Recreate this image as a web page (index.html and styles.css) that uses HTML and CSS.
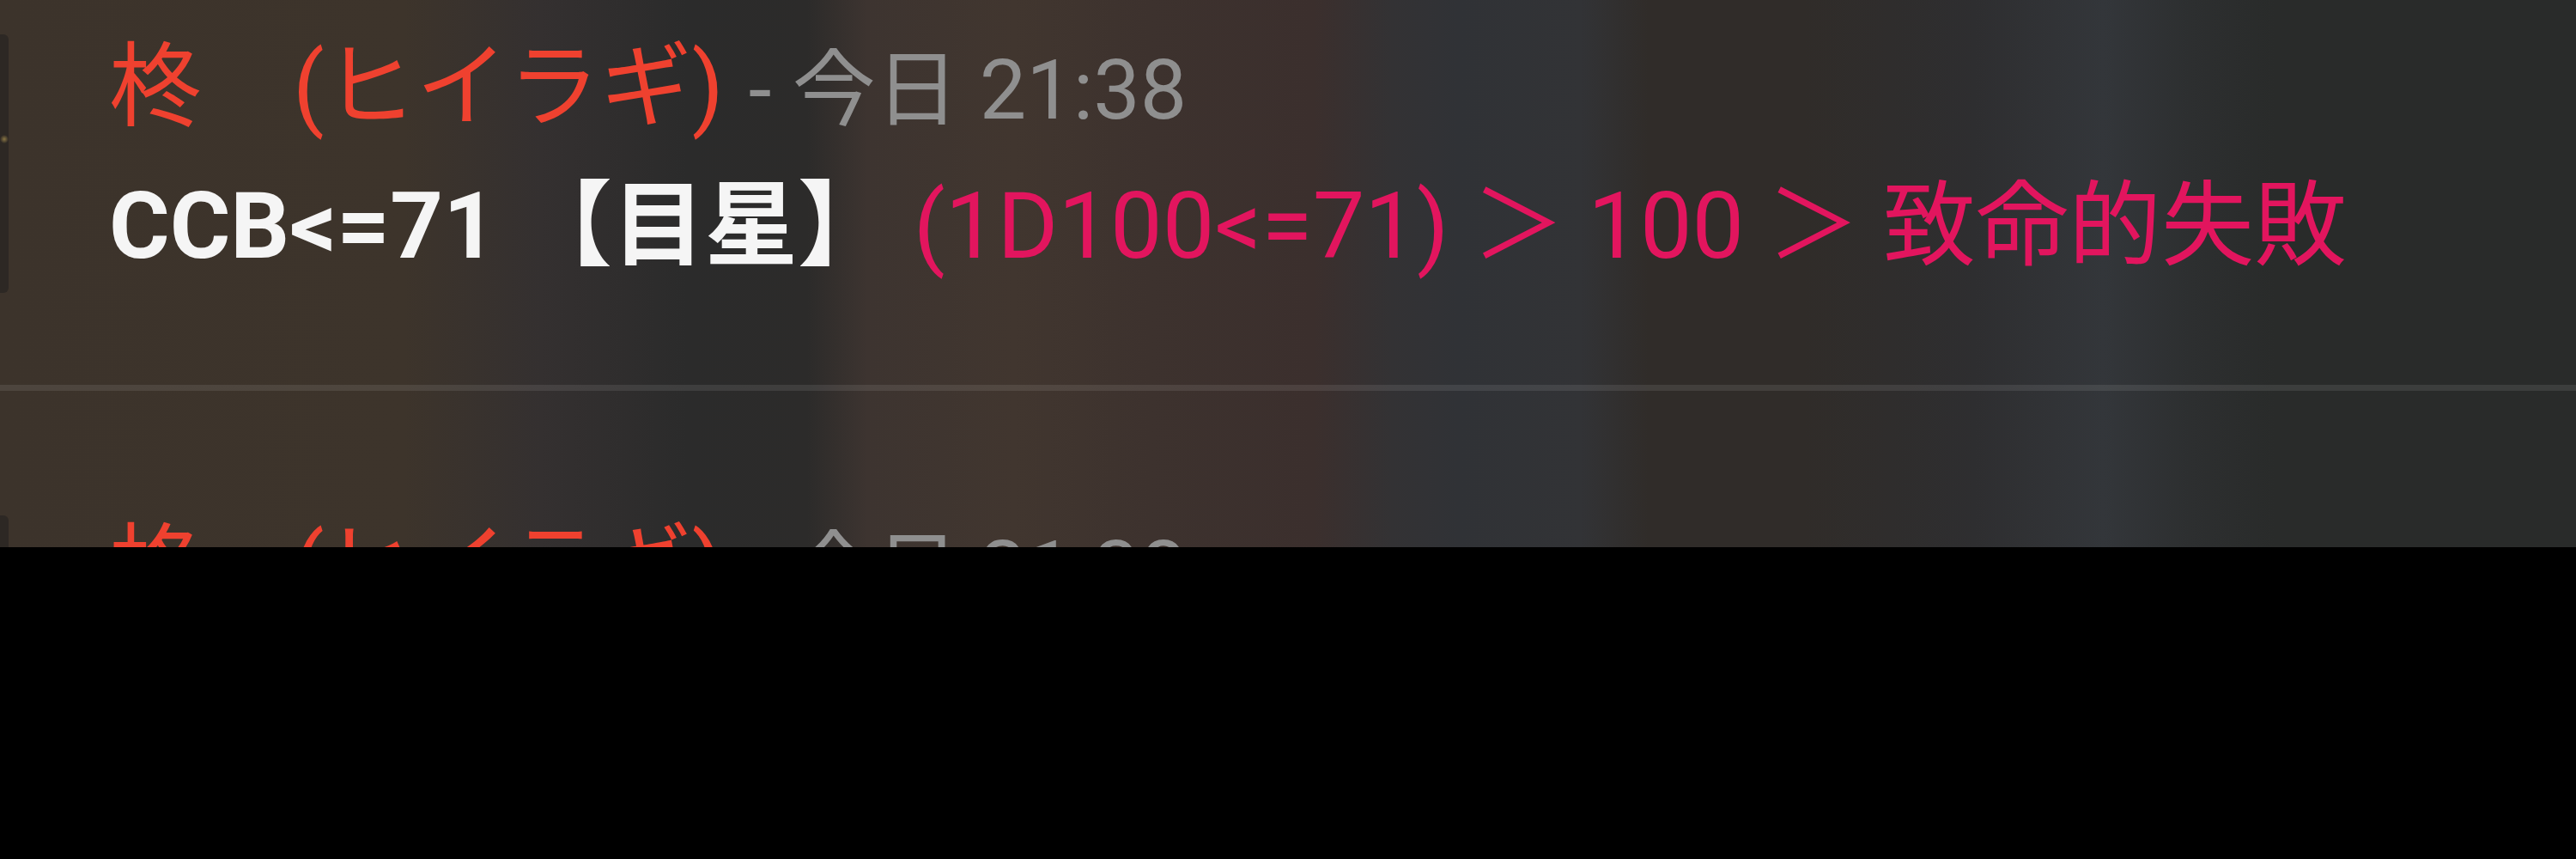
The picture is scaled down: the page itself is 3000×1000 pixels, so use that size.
FILE: index.html
```html
<!DOCTYPE html>
<html lang="ja">
<head>
    <meta charset="UTF-8">
    <meta name="viewport" content="width=device-width, initial-scale=1.0">
    <title>チャットログ</title>
    <link rel="stylesheet" href="styles.css">
</head>
<body>
    <div class="chat-log">
        <div class="messages">
            <div class="message">
                <div class="avatar"></div>
                <div class="message-body">
                    <div class="message-head">
                        <span class="speaker">柊　(ヒイラギ)</span>
                        <span class="timestamp">- 今日 21:38</span>
                    </div>
                    <div class="message-text">
                        <span class="command">CCB&lt;=71 【目星】</span>
                        <span class="dice-result">(1D100&lt;=71) ＞ 100 ＞ 致命的失敗</span>
                    </div>
                </div>
            </div>

            <div class="message">
                <div class="avatar"></div>
                <div class="message-body">
                    <div class="message-head">
                        <span class="speaker">柊　(ヒイラギ)</span>
                        <span class="timestamp">- 今日 21:38</span>
                    </div>
                    <div class="message-text">
                        <span class="command">CCB&lt;=70 【聞き耳】</span>
                        <span class="dice-result">(1D100&lt;=70) ＞ 42 ＞ 成功</span>
                    </div>
                </div>
            </div>
        </div>
    </div>
</body>
</html>
```

FILE: styles.css
```css
* {
    margin: 0;
    padding: 0;
    box-sizing: border-box;
}

body {
    background: #000;
    font-family: Roboto, "Noto Sans CJK JP", sans-serif;
    color: #f5f5f5;
}

/* blurred room image behind the log */
.chat-log {
    height: 637px;
    overflow: hidden;
    background: linear-gradient(90deg,
        #3c332b 0px,
        #3d342b 470px,
        #343030 630px,
        #2b2b2b 800px,
        #2c2b2a 940px,
        #3d3430 1010px,
        #41362f 1180px,
        #3d322e 1340px,
        #3b2f2d 1530px,
        #333234 1620px,
        #303236 1700px,
        #323336 1840px,
        #302c29 1920px,
        #302c29 2100px,
        #2e2e30 2300px,
        #33363a 2450px,
        #2d2f30 2550px,
        #292b2a 2650px,
        #292b2a 3000px);
}

/* log is scrolled down a little */
.messages {
    margin-top: -105px;
}

.message {
    display: flex;
    align-items: flex-start;
    padding: 145px 0 107px;
    border-bottom: 7px solid rgba(255, 255, 255, 0.09);
}

.avatar {
    flex: none;
    width: 300px;
    height: 301px;
    margin-left: -290px;
    border-radius: 6px;
    background: radial-gradient(circle at 295px 122px, rgba(200, 170, 90, 0.6) 0, rgba(200, 170, 90, 0) 5px), #2d2824;
}

.message-body {
    margin-left: 117px;
    padding-top: 6px;
}

.message-head {
    line-height: 112px;
    white-space: nowrap;
}

.speaker {
    font-size: 107px;
    color: #ef412f;
}

.timestamp {
    margin-left: 25px;
    font-size: 97px;
    color: #8f8f8f;
}

.message-text {
    font-size: 108px;
    line-height: 148px;
    white-space: nowrap;
}

.command {
    font-weight: 700;
    color: #f5f5f5;
}

.dice-result {
    color: #e2155e;
}
```
